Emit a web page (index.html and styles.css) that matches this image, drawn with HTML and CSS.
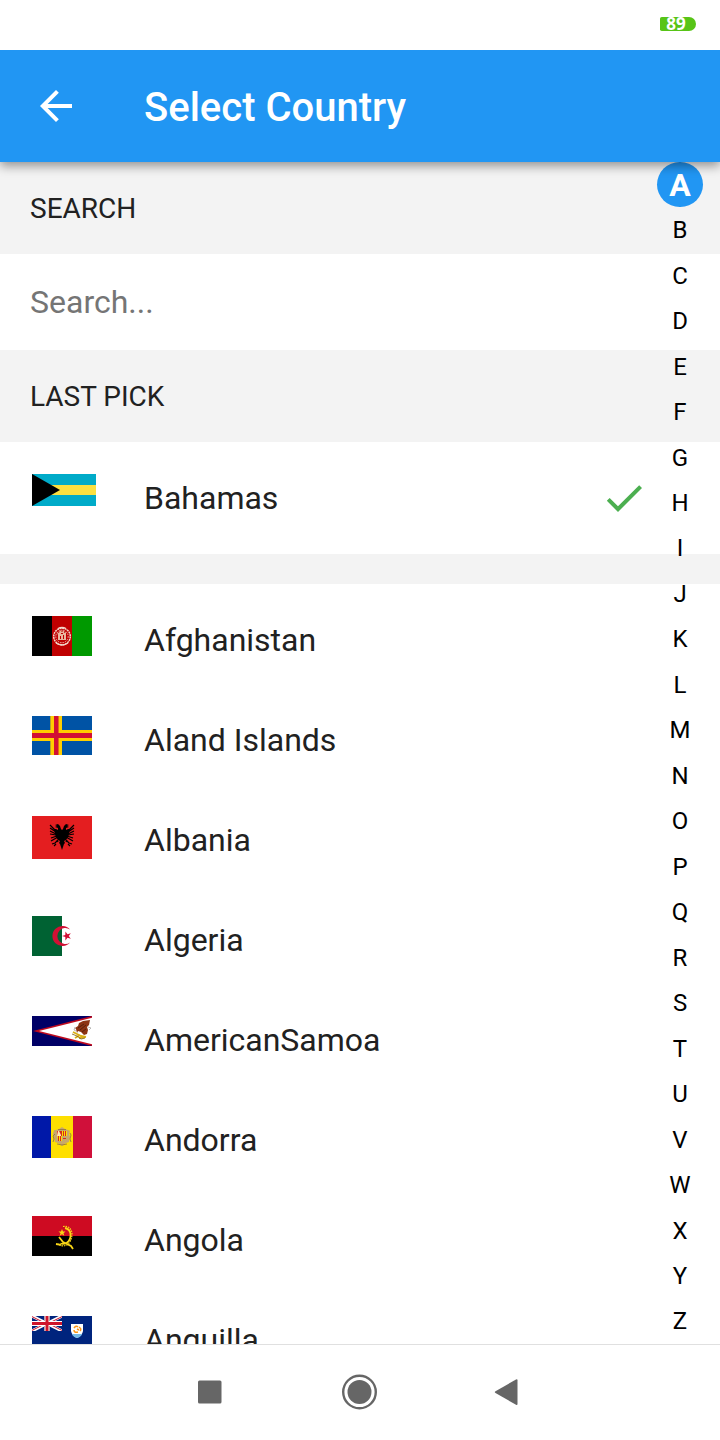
FILE: index.html
```html
<!DOCTYPE html>
<html lang="en">
<head>
<meta charset="utf-8">
<meta name="viewport" content="width=device-width, initial-scale=1">
<title>Select Country</title>
<link rel="stylesheet" href="styles.css">
</head>
<body>
<div class="status-bar">
  <span class="battery">89</span>
</div>

<header class="app-bar">
  <button class="back" type="button" aria-label="Back">
    <svg viewBox="0 0 24 24" width="48" height="48" fill="currentColor"><path d="M20 11H7.83l5.59-5.59L12 4l-8 8 8 8 1.41-1.41L7.83 13H20v-2z"/></svg>
  </button>
  <h1 class="title">Select Country</h1>
</header>

<div class="content">
  <main class="scroller">
    <label class="section-label" for="search">SEARCH</label>
    <input class="search" id="search" type="text" placeholder="Search...">
    <h2 class="section-label">LAST PICK</h2>
    <button class="row last-pick" type="button">
      <span class="flag">
        <svg width="64" height="32" viewBox="0 0 64 32"><path fill="#00abc9" d="M0 0h64v32H0z"/><path fill="#fae042" d="M0 11h64v10H0z"/><path d="M0 0l28 16L0 32z"/></svg>
      </span>
      <span class="name">Bahamas</span>
      <svg class="check" viewBox="0 0 24 24" width="48" height="48" fill="currentColor"><path d="M9 16.17L4.83 12l-1.42 1.41L9 19 21 7l-1.41-1.41z"/></svg>
    </button>
    <div class="divider"></div>
    <ul class="countries">
      <li id="A"><button class="row" type="button">
        <span class="flag">
          <svg width="60" height="40" viewBox="0 0 60 40"><path d="M0 0h20v40H0z"/><path fill="#bf0000" d="M20 0h20v40H20z"/><path fill="#009900" d="M40 0h20v40H40z"/>
            <g fill="none" stroke="#f3d5c8"><circle cx="30" cy="20.500" r="8.300" stroke-width="1.500" stroke-dasharray="2 .6"/><circle cx="30" cy="20.500" r="6.200" stroke-width=".8" stroke-dasharray="1.500 1"/><path d="M26 12.500q4-2 8 0M24 27q6 4 12 0" stroke-width="1.300"/></g>
            <path fill="#e9b79f" d="M26 24v-5l-1-3 2 1 1-3 2 2 2-2v3l2-1v8z"/><path fill="#bf0000" d="M28 23v-3h1v3zM31 23v-4h1v4zM29 17h2v1h-2z"/></svg>
        </span><span class="name">Afghanistan</span></button></li>
      <li><button class="row" type="button">
        <span class="flag">
          <svg width="60" height="39" viewBox="0 0 60 39"><path fill="#0053a5" d="M0 0h60v39H0z"/><path fill="#ffce00" d="M18 0h12v14h30v11H30v14H18V25H0V14h18z"/><path fill="#b6a32d" d="M18 0h1v14h-1zM18 25h1v14h-1z"/><path fill="#d21034" d="M22 0h4v17h34v5H26v17h-4V22H0v-5h22z"/><path fill="#e26b19" d="M26 0h1v17h-1zM26 22h1v17h-1z"/></svg>
        </span><span class="name">Aland Islands</span></button></li>
      <li><button class="row" type="button">
        <span class="flag">
          <svg width="60" height="43" viewBox="0 0 60 43"><path fill="#e41e20" d="M0 0h60v43H0z"/>
            <path d="M29 13l-1-3-2-2-3 1 2 1-2 1 3 1 0 2-2-1-2 0 1 4 1 4 2 3 2 1-1 2 1 1 1 3 1 3 1-3 1-3 1-1-1-2 2-1 2-3 1-4 1-4-2 0-2 1 0-2 3-1-2-1 2-1-3-1-2 2-1 3-1 1z"/>
            <path fill="none" stroke="#000" stroke-width="1.200" d="M18 9l6 6M18 12l6 4M18 15l6 3M18 18l6 1M19 22l6-2M19 25l7-4M42 9l-6 6M42 12l-6 4M42 15l-6 3M42 18l-6 1M41 22l-6-2M41 25l-7-4M20 28l3-1 3-3M22 30l2-2M40 28l-3-1-3-3M38 30l-2-2M25 24l1 2M35 24l-1 2"/></svg>
        </span><span class="name">Albania</span></button></li>
      <li><button class="row" type="button">
        <span class="flag">
          <svg width="60" height="40" viewBox="0 0 60 40"><path fill="#fff" d="M0 0h60v40H0z"/><path fill="#006233" d="M0 0h30v40H0z"/><path fill="#d21034" d="M38 13.500A10 10 0 1 0 38 26.500A8 8 0 1 1 38 13.500z"/><path fill="#d21034" d="M30 20l3.300-1.100.1-3.500 2.100 2.800 3.300-1-2 2.800 2 2.800-3.300-1-2.100 2.800-.1-3.500z"/></svg>
        </span><span class="name">Algeria</span></button></li>
      <li><button class="row" type="button">
        <span class="flag">
          <svg width="60" height="30" viewBox="0 0 60 30"><path fill="#006" d="M0 0h60v30H0z"/><path fill="#bf0a1e" d="M1 15L60 0v30z"/><path fill="#fff" d="M7 15L60 1.800v26.400z"/>
            <path fill="#8c3413" d="M43 12l3-2 1-3 4-2 7-1-1 5-2 2 1 3-1 4-3 1-3-3-3-1-1 2-1-4z"/><path fill="none" stroke="#4a1a0a" d="M46 12l6-4M48 14l6-5M50 16l4-3" stroke-width=".8"/><path fill="none" stroke="#d9ae16" stroke-width="1.800" d="M41 16l4 2 4 2 5 1M43 22l5-3M47 22l6-1"/><path fill="none" stroke="#7c5b10" stroke-width=".8" d="M40 18l5 2 4 3 4-1"/><path fill="none" stroke="#aaa" stroke-width=".8" d="M43 11l-1 3 2 1M56 11l3 1-2 2"/></svg>
        </span><span class="name">AmericanSamoa</span></button></li>
      <li><button class="row" type="button">
        <span class="flag">
          <svg width="60" height="42" viewBox="0 0 60 42"><path fill="#0018a8" d="M0 0h19v42H0z"/><path fill="#fedf00" d="M19 0h22v42H19z"/><path fill="#d0103a" d="M41 0h19v42H41z"/>
            <path fill="#c7a86c" d="M24 14l3-1 3-2 3 2 3 1 2 1-1 3 1 3-1 5-3 1-4 3-4-3-3-1-1-5-1-3 1-4z"/><path fill="none" stroke="#8e713f" stroke-width=".8" d="M23 18l-2 2 1 3-1 3M38 17l1 2-1 4 1 3M25 28l5 1 5-1M26 13.500h8"/><path fill="#d52b1e" d="M25 15h5v5h-5z"/><path fill="#ffe9b0" d="M26 15h1l2 4v1h-4z"/><path fill="#fedf00" d="M30 15h5v5h-5zM25 20h5v5h-4z"/><path fill="#d52b1e" d="M31 15h1v5h-1zM33 15h1v5h-1zM26 20h1v5h-1zM28 20h1v5h-1zM31 22h3v1h-3z"/></svg>
        </span><span class="name">Andorra</span></button></li>
      <li><button class="row" type="button">
        <span class="flag">
          <svg width="60" height="40" viewBox="0 0 60 40"><path fill="#ce0b22" d="M0 0h60v20H0z"/><path d="M0 20h60v20H0z"/>
            <g fill="none" stroke="#f9d616"><path stroke-width="1.800" d="M33 12q5 1 5.500 6 .5 6-4 9-3 1.500-6 .5"/><path stroke-width="1.200" stroke-dasharray="1.500 1" d="M31 10.500q8-1 9 7Q40 25 35 29q-5 2-9-1"/><path stroke-width="1.800" d="M27 21l4 5 8 4 2 3M24 28l5 .8"/></g><path fill="#f9d616" d="M30 13l1 2.500h2.500l-2 1.700.8 2.500-2.300-1.500-2.300 1.500.8-2.500-2-1.700H29z"/></svg>
        </span><span class="name">Angola</span></button></li>
      <li><button class="row" type="button">
        <span class="flag">
          <svg width="60" height="30" viewBox="0 0 60 30"><path fill="#00247d" d="M0 0h60v30H0z"/>
            <svg width="30" height="15" viewBox="0 0 30 15"><path stroke="#fff" stroke-width="3" d="M0 0l30 15M30 0L0 15"/><path stroke="#cf142b" stroke-width="1" d="M0 .6l12 6M18 8.400l12 6M30 .6L18 6.600M12 8.400l-12 6"/><path fill="#fff" d="M12 0h6v5h12v5H18v5h-6v-5H0V5h12z"/><path fill="#b8a2ac" d="M12 0h1v5h-1zM17 0h1v5h-1zM12 10h1v5h-1zM17 10h1v5h-1z"/><path fill="#cf142b" d="M13.500 0h3v6H30v3H16.500v6h-3V9H0V6h13.500z"/></svg>
            <path fill="#fff" d="M39 8h12v7q-1 5-6 7-5-2-6-7z"/><path fill="#75b9e7" d="M40 18h10q-1 3-5 4-4-1-5-4z"/><path fill="none" stroke="#ff9512" stroke-width="1.500" d="M42 12q2-3 4-1M47 11q3 2 1 4M46 16q-4 1-4-2M45 13l2 1"/></svg>
        </span><span class="name">Anguilla</span></button></li>
    </ul>
  </main>
  <nav class="index" aria-label="Alphabet">
    <a class="current" href="#A">A</a><a href="#B">B</a><a href="#C">C</a><a href="#D">D</a><a href="#E">E</a><a href="#F">F</a><a href="#G">G</a><a href="#H">H</a><a href="#I">I</a><a href="#J">J</a><a href="#K">K</a><a href="#L">L</a><a href="#M">M</a><a href="#N">N</a><a href="#O">O</a><a href="#P">P</a><a href="#Q">Q</a><a href="#R">R</a><a href="#S">S</a><a href="#T">T</a><a href="#U">U</a><a href="#V">V</a><a href="#W">W</a><a href="#X">X</a><a href="#Y">Y</a><a href="#Z">Z</a>
  </nav>
</div>

<footer class="system-nav">
  <button type="button" aria-label="Recent apps"><svg width="40" height="40" viewBox="0 0 40 40" fill="currentColor"><rect x="9" y="8.500" width="23.500" height="23" rx="1.500"/></svg></button>
  <button type="button" aria-label="Home"><svg width="40" height="40" viewBox="0 0 40 40"><circle cx="19.500" cy="20" r="16.300" fill="none" stroke="currentColor" stroke-width="2.400"/><circle cx="19.500" cy="20" r="12" fill="currentColor"/></svg></button>
  <button type="button" aria-label="Back"><svg width="40" height="40" viewBox="0 0 40 40" fill="currentColor"><path d="M4.500 19.200L25 7.500q1.500-.8 1.500.8v23.700q0 1.600-1.500.8L4.500 21q-1.500-.9 0-1.800z"/></svg></button>
</footer>
</body>
</html>
```

FILE: styles.css
```css
* {
  box-sizing: border-box;
}

body {
  margin: 0;
  height: 100vh;
  display: flex;
  flex-direction: column;
  overflow: hidden;
  background: #fff;
  color: #212121;
  font-family: Roboto, "Liberation Sans", sans-serif;
}

button {
  padding: 0;
  border: 0;
  background: none;
  color: inherit;
  font: inherit;
  cursor: pointer;
}

svg {
  display: block;
}

.status-bar {
  position: relative;
  z-index: 3;
  flex: none;
  height: 50px;
  padding: 0 24px 2px;
  display: flex;
  align-items: center;
  justify-content: flex-end;
  background: #fff;
}

.battery {
  width: 36px;
  height: 14px;
  padding-right: 4px;
  border-radius: 2px 8px 8px 2px;
  background: #57c417;
  color: #fff;
  font-family: "Open Sans", sans-serif;
  font-size: 17px;
  font-weight: 700;
  line-height: 14px;
  text-align: center;
}

.app-bar {
  position: relative;
  z-index: 2;
  flex: none;
  height: 112px;
  padding: 0 32px;
  display: flex;
  align-items: center;
  gap: 64px;
  background: #2196f3;
  color: #fff;
  box-shadow: 0 4px 10px rgba(0, 0, 0, 0.4);
}

.title {
  margin: 0;
  padding-top: 4px;
  font-size: 40px;
  font-weight: 500;
  line-height: 48px;
}

.content {
  position: relative;
  flex: 1;
  min-height: 0;
}

.scroller {
  height: 100%;
  overflow-y: auto;
  scrollbar-width: none;
}

.section-label {
  display: flex;
  align-items: center;
  height: 92px;
  margin: 0;
  padding: 0 30px;
  background: #f3f3f3;
  font-size: 28px;
  font-weight: 400;
}

.search {
  display: block;
  width: 100%;
  height: 96px;
  padding: 0 30px;
  border: 0;
  outline: 0;
  background: #fff;
  color: inherit;
  font: inherit;
  font-size: 32px;
}

.search::placeholder {
  color: #757575;
}

.row {
  width: 100%;
  height: 100px;
  padding: 0 72px 0 32px;
  display: flex;
  align-items: center;
  gap: 48px;
  text-align: left;
  font-size: 32px;
}

.last-pick {
  height: 112px;
}

.flag {
  flex: none;
  width: 64px;
  height: 48px;
}

.name {
  flex: 1;
}

.check {
  color: #4caf50;
}

.divider {
  height: 30px;
  background: #f3f3f3;
}

.countries {
  margin: 0;
  padding: 6px 0;
  list-style: none;
}

.index {
  position: absolute;
  top: 0;
  right: 17px;
  bottom: 0;
  width: 46px;
  display: flex;
  flex-direction: column;
}

.index a {
  flex: 1;
  display: flex;
  align-items: center;
  justify-content: center;
  color: #000;
  font-size: 24px;
  line-height: 28px;
  text-decoration: none;
}

.index .current {
  border-radius: 50%;
  background: #2196f3;
  color: #fff;
  font-size: 32px;
  font-weight: 700;
}

.system-nav {
  flex: none;
  height: 96px;
  padding: 0 134px;
  display: flex;
  align-items: flex-start;
  border-top: 1px solid #e0e0e0;
  color: #666;
}

.system-nav button {
  flex: 1;
  height: 94px;
  display: flex;
  align-items: center;
  justify-content: center;
}
```
